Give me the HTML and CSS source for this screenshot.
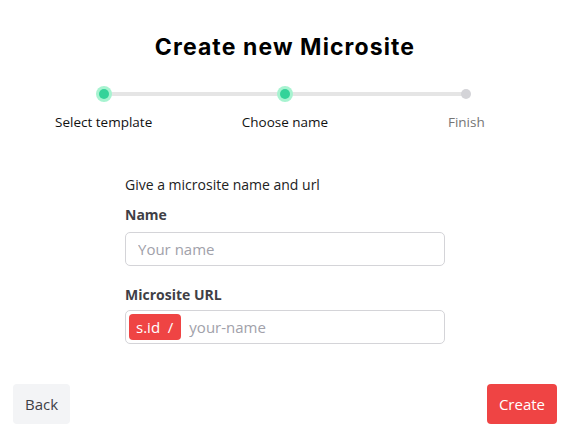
FILE: index.html
```html
<!DOCTYPE html>
<html lang="en">
<head>
    <meta charset="UTF-8">
    <meta name="viewport" content="width=device-width, initial-scale=1.0">
    <title>Create new Microsite</title>
    <link rel="stylesheet" href="styles.css">
</head>
<body>
    <div class="modal">
        <h2 class="title">Create new Microsite</h2>

        <div class="steps">
            <div class="step done">
                <span class="dot"></span>
                <span class="step-label">Select template</span>
            </div>
            <div class="step done">
                <span class="dot"></span>
                <span class="step-label">Choose name</span>
            </div>
            <div class="step">
                <span class="dot"></span>
                <span class="step-label">Finish</span>
            </div>
        </div>

        <div class="form">
            <p class="hint">Give a microsite name and url</p>

            <label for="nameInput">Name</label>
            <input type="text" id="nameInput" placeholder="Your name">

            <label for="urlInput">Microsite URL</label>
            <div class="url-field">
                <span class="prefix">s.id&nbsp;&nbsp;/</span>
                <input type="text" id="urlInput" placeholder="your-name">
            </div>
        </div>

        <div class="actions">
            <button class="btn back">Back</button>
            <button class="btn create">Create</button>
        </div>
    </div>
</body>
</html>
```

FILE: styles.css
```css
body { margin: 0; background: #fff; font-family: "Open Sans", "Noto Sans", sans-serif; color: #111; }
.modal { width: 571px; height: 439px; box-sizing: border-box; padding: 0 14px 15px 13px; display: flex; flex-direction: column; }
.title { margin: 33px 0 0; text-align: center; font-family: Inter, sans-serif; font-size: 23px; font-weight: 700; letter-spacing: 1.1px; line-height: 28px; color: #000; }

.steps { display: flex; margin-top: 18px; position: relative; }
.steps::before { content: ""; position: absolute; top: 13px; left: 91px; right: 91px; height: 4px; background: #e5e5e5; }
.step { flex: 1; display: flex; flex-direction: column; align-items: center; position: relative; }
.dot { width: 10px; height: 10px; margin: 10px 0 8px; border-radius: 50%; background: #d4d4d8; }
.step.done .dot { background: #34d399; box-shadow: 0 0 0 3px #a7f3d0; }
.step-label { margin-top: 6px; font-size: 13.5px; line-height: 18px; color: #757575; }
.step.done .step-label { color: #111; }

.form { width: 320px; margin: 44px auto 0; display: flex; flex-direction: column; }
.hint { margin: 0 0 10px; font-size: 14px; line-height: 20px; color: #222; }
label { font-size: 14px; font-weight: 700; line-height: 20px; color: #3f3f46; margin-bottom: 7px; }
label[for="urlInput"] { margin-bottom: 5px; }
input { font-family: inherit; font-size: 15px; color: #222; border: none; outline: none; background: transparent; }
input::placeholder { color: #a1a1aa; }
#nameInput { height: 34px; box-sizing: border-box; padding: 0 12px; border: 1px solid #d4d4d8; border-radius: 5px; margin-bottom: 19px; }
.url-field { height: 34px; box-sizing: border-box; border: 1px solid #d4d4d8; border-radius: 5px; display: flex; align-items: center; padding: 0 3px; gap: 8px; }
.prefix { background: #ef4444; color: #fff; font-size: 15px; height: 26px; line-height: 26px; padding: 0 8px 0 7px; border-radius: 4px; }
#urlInput { flex: 1; padding: 0; }

.actions { margin-top: auto; display: flex; justify-content: space-between; }
.btn { height: 40px; border: none; border-radius: 4px; font-family: inherit; font-size: 15px; padding: 0 12px; cursor: pointer; }
.back { background: #f3f4f6; color: #3f3f46; }
.create { background: #ef4444; color: #fff; padding: 0 12px; }
```
